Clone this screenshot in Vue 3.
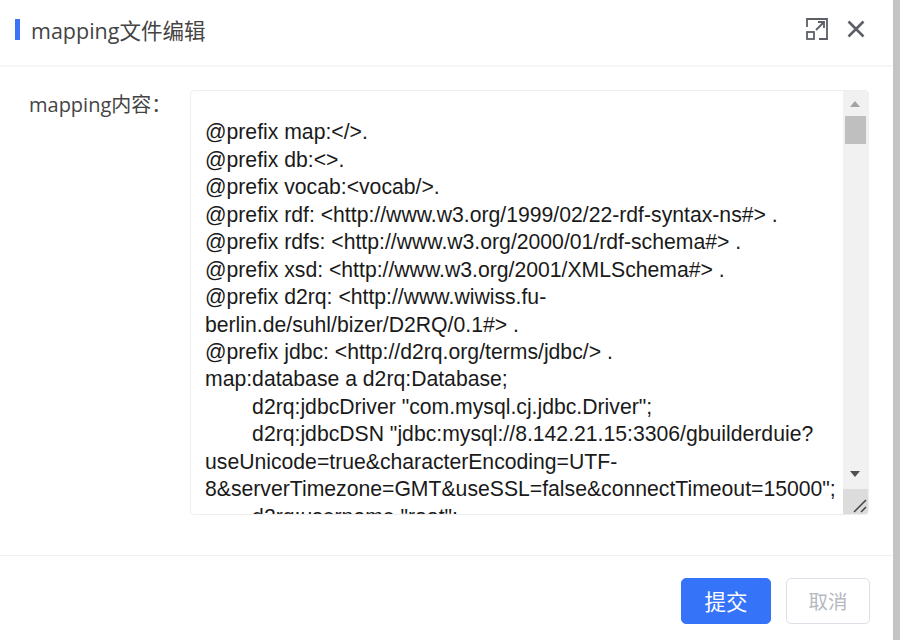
<script setup>
const content = `
@prefix map:</>.
@prefix db:<>.
@prefix vocab:<vocab/>.
@prefix rdf: <http://www.w3.org/1999/02/22-rdf-syntax-ns#> .
@prefix rdfs: <http://www.w3.org/2000/01/rdf-schema#> .
@prefix xsd: <http://www.w3.org/2001/XMLSchema#> .
@prefix d2rq: <http://www.wiwiss.fu-berlin.de/suhl/bizer/D2RQ/0.1#> .
@prefix jdbc: <http://d2rq.org/terms/jdbc/> .
map:database a d2rq:Database;
\td2rq:jdbcDriver "com.mysql.cj.jdbc.Driver";
\td2rq:jdbcDSN "jdbc:mysql://8.142.21.15:3306/gbuilderduie?useUnicode=true&characterEncoding=UTF-8&serverTimezone=GMT&useSSL=false&connectTimeout=15000";
\td2rq:username "root";`
</script>

<template>
  <div class="page">
    <div class="dialog">
      <header class="head">
        <div class="title"><span class="mark"></span><span>mapping文件编辑</span></div>
        <div class="tools">
          <svg class="icon" viewBox="0 0 22 22" width="22" height="22" fill="none" stroke="#5c5f68" stroke-width="1.8">
            <path d="M1 9V1h20v20h-8" />
            <rect x="1" y="14" width="7" height="7" />
            <path d="M10 12l8-8M12 4h6v6" />
          </svg>
          <svg class="icon" viewBox="0 0 18 18" width="18" height="18" fill="none" stroke="#5c5f68" stroke-width="2.6">
            <path d="M1.5 1.5l15 15M16.5 1.5l-15 15" />
          </svg>
        </div>
      </header>
      <main class="body">
        <label class="label">mapping内容：</label>
        <div class="area">
          <div class="text">{{ content }}</div>
          <div class="bar">
            <span class="up"></span>
            <span class="thumb"></span>
            <span class="down"></span>
          </div>
          <div class="corner">
            <svg viewBox="0 0 25 25" width="25" height="25" fill="none" stroke="#444" stroke-width="1.5">
              <path d="M11 23L23 11M18 23l5-5" />
            </svg>
          </div>
        </div>
      </main>
      <footer class="foot">
        <button class="btn primary">提交</button>
        <button class="btn ghost">取消</button>
      </footer>
    </div>
  </div>
</template>

<style>
html, body { margin: 0; background: #fff; }
</style>

<style scoped>
.page {
  width: 900px;
  height: 640px;
  overflow: hidden;
  background: #c4c4c4;
  font-family: "Liberation Sans", "Noto Sans CJK SC", sans-serif;
}
.dialog {
  width: 893px;
  height: 640px;
  background: #fff;
  display: flex;
  flex-direction: column;
}
.head {
  height: 67px;
  flex: none;
  box-sizing: border-box;
  padding: 0 28px 7px 15px;
  display: flex;
  align-items: center;
  justify-content: space-between;
  border-bottom: 2px solid #f5f5f5;
}
.title {
  display: flex;
  align-items: center;
  gap: 11px;
  font-size: 21.5px;
  color: #444;
  font-family: "Open Sans", "Noto Sans CJK SC", sans-serif;
}
.mark { width: 5px; height: 21px; background: #3a75f5; }
.tools { display: flex; align-items: center; gap: 19px; }
.icon { display: block; }
.body {
  flex: 1;
  display: flex;
  padding: 23px 24px 0 29px;
  box-sizing: border-box;
}
.label {
  width: 161px;
  flex: none;
  font-size: 20px;
  line-height: 30px;
  color: #444;
  font-family: "Open Sans", "Noto Sans CJK SC", sans-serif;
}
.area {
  position: relative;
  width: 680px;
  height: 425px;
  border: 1px solid #eeeeee;
  border-radius: 4px;
  box-sizing: border-box;
  overflow: hidden;
}
.text {
  box-sizing: border-box;
  width: 653px;
  height: 423px;
  padding: 0 0 0 14px;
  overflow: hidden;
  font-size: 21.2px;
  line-height: 27.44px;
  color: #1a1a1a;
  white-space: pre-wrap;
  word-break: normal;
  tab-size: 8;
}
.bar {
  position: absolute;
  top: 0;
  right: 0;
  width: 25px;
  height: 398px;
  background: #f1f1f1;
}
.thumb {
  position: absolute;
  left: 2px;
  top: 25px;
  width: 21px;
  height: 28px;
  background: #bfbfbf;
}
.up, .down {
  position: absolute;
  left: 7px;
  width: 0;
  height: 0;
  border-left: 5.5px solid transparent;
  border-right: 5.5px solid transparent;
}
.up { top: 10px; border-bottom: 6px solid #a3a3a3; }
.down { bottom: 12px; border-top: 6px solid #505050; }
.corner {
  position: absolute;
  right: 0;
  bottom: 0;
  width: 25px;
  height: 25px;
  background: #dcdcdc;
}
.corner svg { display: block; }
.foot {
  height: 85px;
  flex: none;
  box-sizing: border-box;
  border-top: 1px solid #f0f0f0;
  padding: 22px 23px 16px 0;
  display: flex;
  justify-content: flex-end;
  gap: 15px;
}
.btn {
  height: 46px;
  box-sizing: border-box;
  border-radius: 5px;
  font-family: "Noto Sans CJK SC", sans-serif;
  padding: 0 0 2px;
}
.primary { width: 90px; font-size: 21.5px; background: #3574f9; border: 1px solid #3574f9; color: #fff; }
.ghost { width: 84px; font-size: 19.5px; background: #fff; border: 1px solid #dcdfe6; color: #b5b9c2; }
</style>
